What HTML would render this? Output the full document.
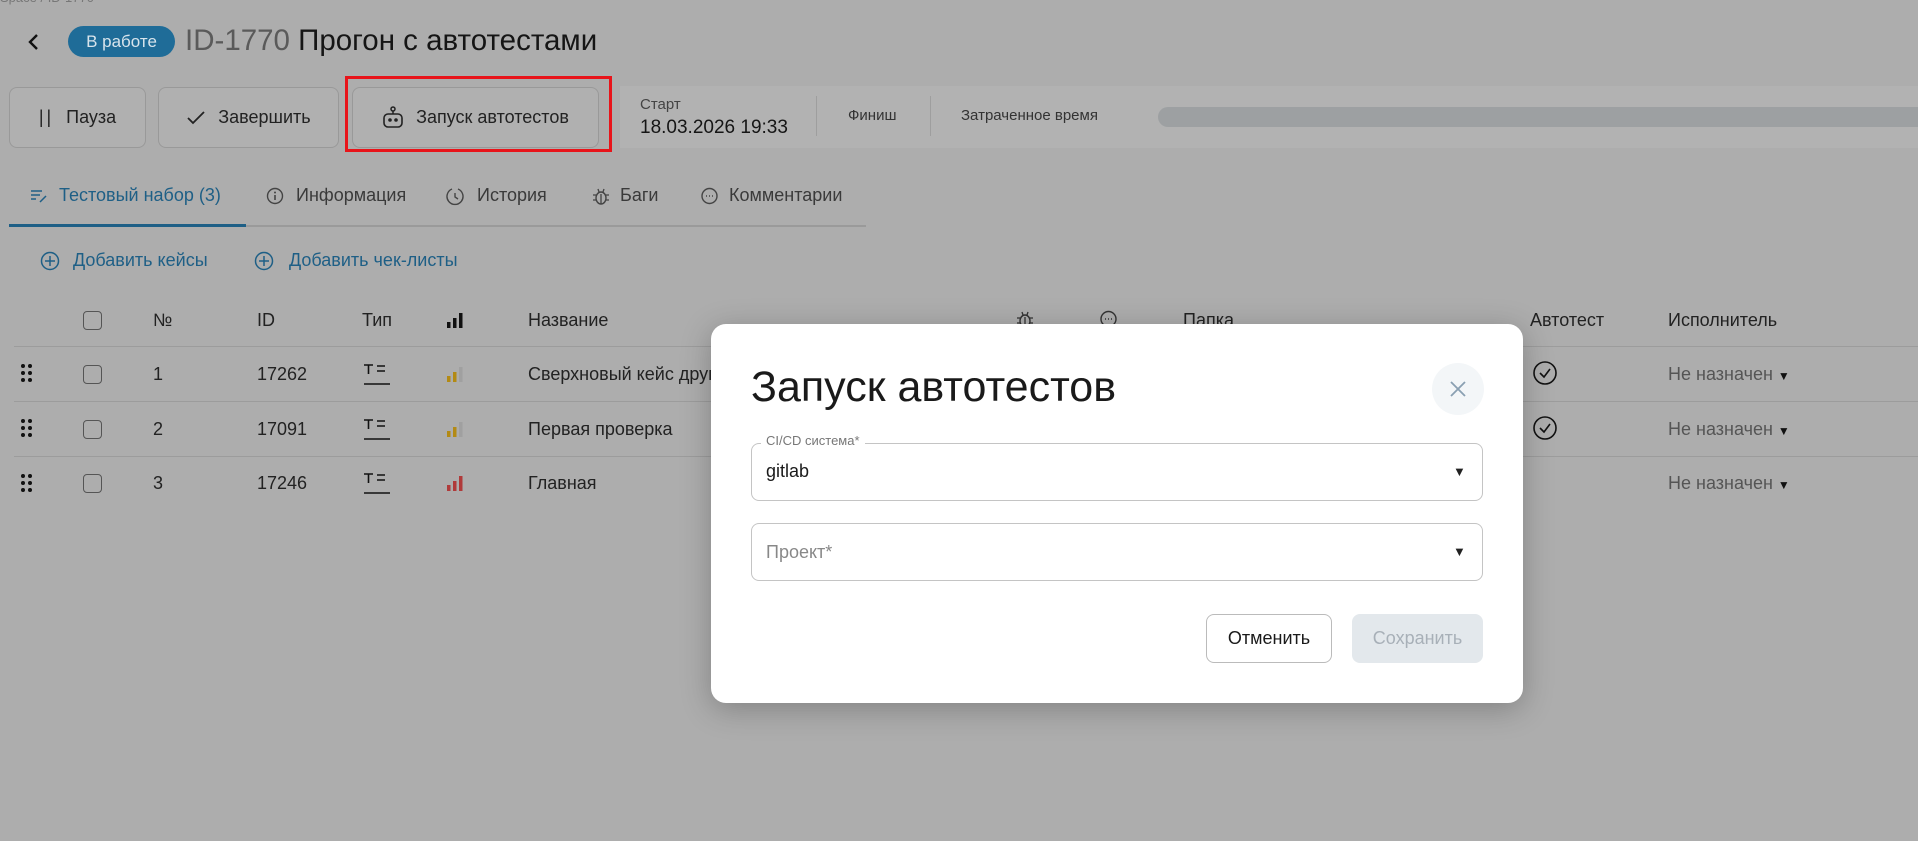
<!DOCTYPE html>
<html><head><meta charset="utf-8"><style>
*{box-sizing:border-box;margin:0;padding:0}
body{width:1918px;height:841px;overflow:hidden;background:#adadad;font-family:"Liberation Sans",sans-serif;color:#1e1e1e;position:relative}
.a{position:absolute;white-space:nowrap}
.btn{position:absolute;border:1px solid #999;border-radius:8px;background:#b0b0b0;font-size:18px;display:flex;align-items:center;justify-content:center;gap:12px;color:#222}
.tab{font-size:18px;color:#3a3a3a}
.h{font-size:18px;color:#222}
.line{position:absolute;left:14px;width:1904px;height:1px;background:#9c9c9c}
.cb{position:absolute;width:19px;height:19px;border:1.5px solid #555;border-radius:4px}
.c{font-size:18px;color:#222}
.nz{font-size:18px;color:#555}
</style></head><body>
<div class="a" style="left:0;top:-10px;font-size:13px;color:#777">Space / ID-1770</div>
<svg class="a" style="left:26px;top:32px" width="16" height="20"><path d="M11 3L4 10l7 7" stroke="#111" stroke-width="2.4" fill="none"/></svg>
<div class="a" style="left:68px;top:26px;width:107px;height:31px;border-radius:16px;background:#1f6c98;color:#d8e4ec;font-size:17px;text-align:center;line-height:31px">В работе</div>
<div class="a" style="left:185px;top:24px;font-size:29.5px;color:#5a5a5a">ID-1770 <span style="color:#151515">Прогон с автотестами</span></div>

<div class="a" style="left:620px;top:86px;width:1298px;height:62px;background:#b2b2b2"></div>
<div class="btn" style="left:9px;top:87px;width:137px;height:61px"><span style="font-size:18px;letter-spacing:3px">||</span>Пауза</div>
<div class="btn" style="left:158px;top:87px;width:181px;height:61px"><svg width="20" height="16"><path d="M2 8l5 5L18 2" stroke="#222" stroke-width="1.8" fill="none"/></svg>Завершить</div>
<div class="btn" style="left:352px;top:87px;width:247px;height:61px"><svg width="22" height="24" viewBox="0 0 22 24"><circle cx="11" cy="3" r="2" fill="none" stroke="#222" stroke-width="1.5"/><path d="M11 5v3" stroke="#222" stroke-width="1.5"/><rect x="2" y="8" width="18" height="13" rx="4" fill="none" stroke="#222" stroke-width="1.6"/><circle cx="8" cy="14" r="1.8" fill="#222"/><circle cx="14" cy="14" r="1.8" fill="#222"/></svg>Запуск автотестов</div>
<div class="a" style="left:345px;top:76px;width:267px;height:76px;border:3px solid #e8141a"></div>
<div class="a" style="left:640px;top:96px;font-size:15px;color:#444">Старт</div>
<div class="a" style="left:640px;top:117px;font-size:19px;color:#151515">18.03.2026 19:33</div>
<div class="a" style="left:816px;top:96px;width:1px;height:40px;background:#9e9e9e"></div>
<div class="a" style="left:848px;top:107px;font-size:15px;color:#333">Финиш</div>
<div class="a" style="left:930px;top:96px;width:1px;height:40px;background:#9e9e9e"></div>
<div class="a" style="left:961px;top:107px;font-size:15px;color:#333">Затраченное время</div>
<div class="a" style="left:1158px;top:107px;width:770px;height:20px;border-radius:10px;background:#9da0a2"></div>

<svg class="a" style="left:30px;top:188px" width="18" height="16"><path d="M1 3h11M1 7h9M1 11h5" stroke="#1e5f86" stroke-width="1.5"/><path d="M10 14l6-6" stroke="#1e5f86" stroke-width="1.5"/></svg>
<div class="a tab" style="left:59px;top:185px;color:#1e5f86">Тестовый набор (3)</div>
<svg class="a" style="left:266px;top:187px" width="18" height="18"><circle cx="9" cy="9" r="7.5" fill="none" stroke="#444" stroke-width="1.4"/><path d="M9 8v5" stroke="#444" stroke-width="1.6"/><circle cx="9" cy="5.5" r="1" fill="#444"/></svg>
<div class="a tab" style="left:296px;top:185px">Информация</div>
<svg class="a" style="left:446px;top:186px" width="18" height="20"><path d="M6 3A8 8 0 1 0 12 3" fill="none" stroke="#444" stroke-width="1.4"/><path d="M9 7v4l3 2" stroke="#444" stroke-width="1.4" fill="none"/></svg>
<div class="a tab" style="left:477px;top:185px">История</div>
<svg class="a" style="left:591px;top:186px" width="20" height="20"><ellipse cx="10" cy="12" rx="5" ry="6" fill="none" stroke="#444" stroke-width="1.4"/><path d="M2 9h3M15 9h3M2 14h3M15 14h3M7 3l1 3M13 3l-1 3M10 8v10" stroke="#444" stroke-width="1.3"/></svg>
<div class="a tab" style="left:620px;top:185px">Баги</div>
<svg class="a" style="left:700px;top:187px" width="19" height="19"><circle cx="9.5" cy="9" r="7.5" fill="none" stroke="#444" stroke-width="1.4"/><path d="M6 9h1M9 9h1M12 9h1" stroke="#444" stroke-width="1.6"/></svg>
<div class="a tab" style="left:729px;top:185px">Комментарии</div>
<div class="a" style="left:9px;top:225px;width:857px;height:2px;background:#9a9a9a"></div>
<div class="a" style="left:9px;top:224px;width:237px;height:3px;background:#1e5f86"></div>

<svg class="a" style="left:40px;top:251px" width="20" height="20"><circle cx="10" cy="10" r="8.5" fill="none" stroke="#1e5f86" stroke-width="1.5"/><path d="M10 5v10M5 10h10" stroke="#1e5f86" stroke-width="1.5"/></svg>
<div class="a tab" style="left:73px;top:250px;color:#1e5f86">Добавить кейсы</div>
<svg class="a" style="left:254px;top:251px" width="20" height="20"><circle cx="10" cy="10" r="8.5" fill="none" stroke="#1e5f86" stroke-width="1.5"/><path d="M10 5v10M5 10h10" stroke="#1e5f86" stroke-width="1.5"/></svg>
<div class="a tab" style="left:289px;top:250px;color:#1e5f86">Добавить чек-листы</div>

<div class="cb" style="left:83px;top:311px"></div>
<div class="a h" style="left:153px;top:310px">№</div>
<div class="a h" style="left:257px;top:310px">ID</div>
<div class="a h" style="left:362px;top:310px">Тип</div>
<svg class="a" style="left:446px;top:311px" width="18" height="18"><rect x="1" y="11" width="3.5" height="6" fill="#111"/><rect x="7" y="7" width="3.5" height="10" fill="#111"/><rect x="13" y="2" width="3.5" height="15" fill="#111"/></svg>
<div class="a h" style="left:528px;top:310px">Название</div>
<svg class="a" style="left:1015px;top:309px" width="20" height="20"><ellipse cx="10" cy="12" rx="5" ry="6" fill="none" stroke="#333" stroke-width="1.4"/><path d="M2 9h3M15 9h3M2 14h3M15 14h3M7 3l1 3M13 3l-1 3M10 8v10" stroke="#333" stroke-width="1.3"/></svg>
<svg class="a" style="left:1099px;top:310px" width="19" height="19"><circle cx="9.5" cy="9" r="7.5" fill="none" stroke="#333" stroke-width="1.4"/><path d="M6 9h1M9 9h1M12 9h1" stroke="#333" stroke-width="1.6"/></svg>
<div class="a h" style="left:1183px;top:310px">Папка</div>
<div class="a h" style="left:1530px;top:310px">Автотест</div>
<div class="a h" style="left:1668px;top:310px">Исполнитель</div>
<div class="line" style="top:346px"></div>
<div class="line" style="top:401px"></div>
<div class="line" style="top:456px"></div>

<svg class="a" style="left:20px;top:363px" width="16" height="80"><g fill="#111"><circle cx="3" cy="3" r="2"/><circle cx="10" cy="3" r="2"/><circle cx="3" cy="10" r="2"/><circle cx="10" cy="10" r="2"/><circle cx="3" cy="17" r="2"/><circle cx="10" cy="17" r="2"/></g><g fill="#111" transform="translate(0,55)"><circle cx="3" cy="3" r="2"/><circle cx="10" cy="3" r="2"/><circle cx="3" cy="10" r="2"/><circle cx="10" cy="10" r="2"/><circle cx="3" cy="17" r="2"/><circle cx="10" cy="17" r="2"/></g></svg>
<svg class="a" style="left:20px;top:473px" width="16" height="22"><g fill="#111"><circle cx="3" cy="3" r="2"/><circle cx="10" cy="3" r="2"/><circle cx="3" cy="10" r="2"/><circle cx="10" cy="10" r="2"/><circle cx="3" cy="17" r="2"/><circle cx="10" cy="17" r="2"/></g></svg>
<div class="cb" style="left:83px;top:365px"></div><div class="cb" style="left:83px;top:420px"></div><div class="cb" style="left:83px;top:474px"></div>
<div class="a c" style="left:153px;top:364px">1</div><div class="a c" style="left:153px;top:419px">2</div><div class="a c" style="left:153px;top:473px">3</div>
<div class="a c" style="left:257px;top:364px">17262</div><div class="a c" style="left:257px;top:419px">17091</div><div class="a c" style="left:257px;top:473px">17246</div>
<svg class="a" style="left:362px;top:362px" width="30" height="140"><g stroke="#111" stroke-width="1.6" fill="none"><path d="M2 3h9M6.5 3v9M15 4h8M15 9h8M2 22h26"/><g transform="translate(0,55)"><path d="M2 3h9M6.5 3v9M15 4h8M15 9h8M2 22h26"/></g><g transform="translate(0,109)"><path d="M2 3h9M6.5 3v9M15 4h8M15 9h8M2 22h26"/></g></g></svg>
<svg class="a" style="left:446px;top:365px" width="18" height="130"><g><rect x="1" y="11" width="3.5" height="6" fill="#b38a14"/><rect x="7" y="7" width="3.5" height="10" fill="#b38a14"/><rect x="13" y="2" width="3.5" height="15" fill="#a0a0a0"/></g><g transform="translate(0,55)"><rect x="1" y="11" width="3.5" height="6" fill="#b38a14"/><rect x="7" y="7" width="3.5" height="10" fill="#b38a14"/><rect x="13" y="2" width="3.5" height="15" fill="#a0a0a0"/></g><g transform="translate(0,109)" fill="#b03a3a"><rect x="1" y="11" width="3.5" height="6"/><rect x="7" y="7" width="3.5" height="10"/><rect x="13" y="2" width="3.5" height="15"/></g></svg>
<div class="a c" style="left:528px;top:364px">Сверхновый кейс друг</div><div class="a c" style="left:528px;top:419px">Первая проверка</div><div class="a c" style="left:528px;top:473px">Главная</div>
<svg class="a" style="left:1532px;top:361px" width="26" height="80"><circle cx="13" cy="12" r="11" fill="none" stroke="#111" stroke-width="1.6"/><path d="M8 12l4 4 6-8" stroke="#111" stroke-width="1.6" fill="none"/><g transform="translate(0,55)"><circle cx="13" cy="12" r="11" fill="none" stroke="#111" stroke-width="1.6"/><path d="M8 12l4 4 6-8" stroke="#111" stroke-width="1.6" fill="none"/></g></svg>
<div class="a nz" style="left:1668px;top:364px">Не назначен <span style="font-size:12px;color:#111">▼</span></div>
<div class="a nz" style="left:1668px;top:419px">Не назначен <span style="font-size:12px;color:#111">▼</span></div>
<div class="a nz" style="left:1668px;top:473px">Не назначен <span style="font-size:12px;color:#111">▼</span></div>

<div class="a" style="left:711px;top:324px;width:812px;height:379px;background:#fff;border-radius:15px;box-shadow:0 6px 30px rgba(0,0,0,.25)"></div>
<div class="a" style="left:751px;top:363px;font-size:43px;color:#1a1a1a">Запуск автотестов</div>
<div class="a" style="left:1432px;top:363px;width:52px;height:52px;border-radius:50%;background:#f3f6f8"></div>
<svg class="a" style="left:1449px;top:380px" width="18" height="18"><path d="M2 2l14 14M16 2L2 16" stroke="#8aa0b2" stroke-width="1.8"/></svg>
<div class="a" style="left:751px;top:443px;width:732px;height:58px;border:1px solid #c4c4c4;border-radius:8px"></div>
<div class="a" style="left:761px;top:433px;background:#fff;padding:0 5px;font-size:13px;color:#777">CI/CD система*</div>
<div class="a" style="left:766px;top:461px;font-size:18px;color:#1a1a1a">gitlab</div>
<div class="a" style="left:1453px;top:464px;font-size:13px;color:#222">▼</div>
<div class="a" style="left:751px;top:523px;width:732px;height:58px;border:1px solid #c4c4c4;border-radius:8px"></div>
<div class="a" style="left:766px;top:542px;font-size:18px;color:#888">Проект*</div>
<div class="a" style="left:1453px;top:544px;font-size:13px;color:#222">▼</div>
<div class="a" style="left:1206px;top:614px;width:126px;height:49px;border:1px solid #bbb;border-radius:8px;font-size:18px;line-height:47px;text-align:center;color:#1a1a1a">Отменить</div>
<div class="a" style="left:1352px;top:614px;width:131px;height:49px;background:#e3e8ec;border-radius:8px;font-size:18px;line-height:49px;text-align:center;color:#a8b0b8">Сохранить</div>
</body></html>
